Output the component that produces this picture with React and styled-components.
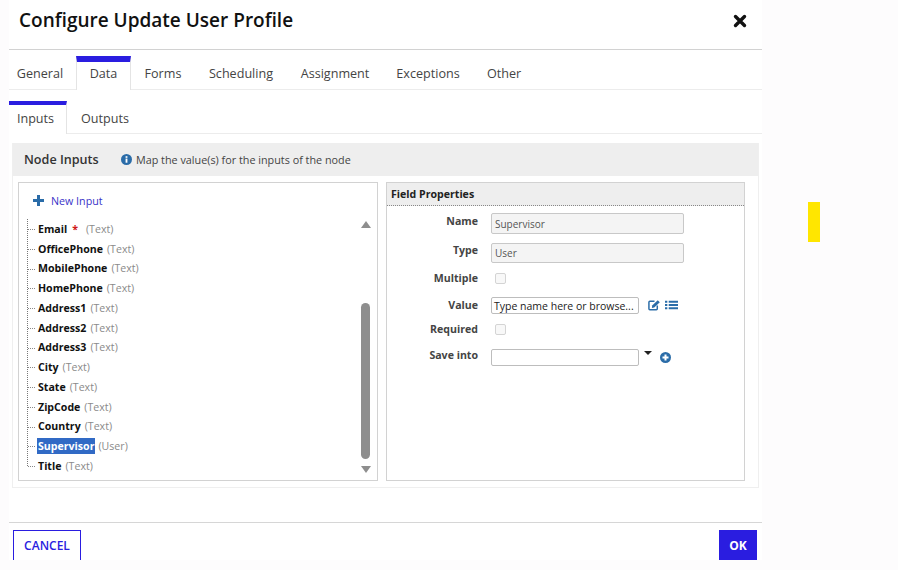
import React from 'react';
import styled, { createGlobalStyle, css } from 'styled-components';

const Global = createGlobalStyle`
  html, body { margin: 0; padding: 0; background: #fdfcfd; }
  * { box-sizing: border-box; }
`;
const BLUE = '#2a1de0';
const ICON = '#2a6ca8';

const Page = styled.div`
  width: 898px; height: 570px; display: flex; padding-left: 9px; overflow: hidden;
  background: #fdfcfd; font-family: "Open Sans", "Liberation Sans", sans-serif; color: #333;
`;
const Modal = styled.div`
  width: 753px; height: 560px; background: #fff; display: flex; flex-direction: column; overflow: hidden;
`;
const Side = styled.div`
  flex: 1; padding: 202px 0 0 46px;
`;
const Marker = styled.div`
  width: 12px; height: 40px; background: #ffe600;
`;
const Header = styled.header`
  height: 50px; flex: none; border-bottom: 1px solid #d2d2d2; display: flex; justify-content: space-between;
  padding: 6px 15px 0 10px;
`;
const Title = styled.h1`
  margin: 0; font-size: 19px; line-height: 28px; font-weight: 600; color: #111;
`;
const Close = styled.svg`
  width: 14px; height: 14px; margin-top: 8px;
`;
const TabBar = styled.nav`
  display: flex; flex: none; height: ${p => p.$h}px; margin-top: ${p => p.$top}px; border-bottom: 1px solid #ececec;
`;
const tabBase = css`
  font-size: 12.6px; color: #444; display: flex; align-items: center; justify-content: center;
  width: ${p => p.$w}px; margin-bottom: -1px; padding-right: ${p => p.$shift || 0}px;
`;
const MainTab = styled.div`
  ${tabBase}
  height: 40px; padding-top: 6px;
  ${p => p.$active && css`
    height: 34px; margin-top: 6px; padding: 0 0 6px; background: #fff;
    border-top: 6px solid ${BLUE}; border-left: 1px solid #e4e4e4; border-right: 1px solid #e4e4e4;
  `}
`;
const SubTab = styled.div`
  ${tabBase}
  height: 33px; padding-top: 4px; padding-bottom: 3px;
  ${p => p.$active && css`
    padding-top: 0; background: #fff; border-top: 4px solid ${BLUE}; border-right: 1px solid #e4e4e4;
  `}
`;
const Panel = styled.section`
  margin: 9px 3px 0; height: 345px; flex: none; border: 1px solid #efefef; border-top: 0; display: flex; flex-direction: column;
`;
const PanelHead = styled.div`
  height: 33px; flex: none; background: #eee; display: flex; align-items: center; padding-left: 11px;
`;
const PanelTitle = styled.span`
  font-size: 12.6px; font-weight: 600; color: #333; width: 97px;
`;
const Hint = styled.span`
  font-size: 10.8px; color: #444; display: flex; align-items: center; gap: 4px;
`;
const Columns = styled.div`
  display: flex; gap: 8px; padding: 6px 0 0 5px;
`;
const Box = styled.div`
  width: ${p => p.$w}px; height: 299px; border: 1px solid #d2d2d2; position: relative;
`;
const NewInput = styled.div`
  display: flex; align-items: center; gap: 7px; font-size: 10.7px; color: #3a33c8; padding: 0 0 1px 14px; height: 36px;
`;
const Tree = styled.ul`
  list-style: none; margin: 0; padding: 0 0 0 7px; position: relative;
  &::before { content: ""; position: absolute; left: 8px; top: 0; height: 247px; border-left: 1px dotted #777; }
`;
const Node = styled.li`
  height: 19.75px; display: flex; align-items: center; font-size: 10.6px; padding-left: 11px; position: relative;
  &::before { content: ""; position: absolute; left: 2px; top: 10px; width: 7px; border-top: 1px dotted #888; }
`;
const NodeName = styled.span`
  font-weight: 700; color: #111; padding: 0 1px;
  ${p => p.$sel && 'background: #316ac5; color: #fff; line-height: 16px;'}
`;
const Star = styled.span`
  color: #d01818; font-weight: 700; margin-left: 4px; margin-right: 5px;
`;
const NodeType = styled.span`
  color: #8a8a8a; margin-left: 3px;
`;
const Scroll = styled.div`
  position: absolute; right: 6px; top: 38px; bottom: 7px; width: 11px; display: flex; flex-direction: column; align-items: center; justify-content: space-between;
`;
const Thumb = styled.div`
  position: absolute; left: 1px; top: 82px; width: 9px; height: 156px; border-radius: 4.5px; background: #8e8e8e;
`;
const Arrow = styled.div`
  width: 0; height: 0; border-left: 5px solid transparent; border-right: 5px solid transparent;
  ${p => (p.$up ? 'border-bottom: 7px solid #8e8e8e;' : 'border-top: 7px solid #8e8e8e;')}
`;
const FieldHead = styled.div`
  height: 23px; background: #eee; border-bottom: 1px dotted #888; font-size: 10.6px; font-weight: 700; color: #222;
  display: flex; align-items: center; padding-left: 4px;
`;
const Form = styled.div`
  display: grid; grid-template-columns: 91px auto; column-gap: 13px; padding-top: 7px;
`;
const Label = styled.div`
  font-size: 10.6px; font-weight: 700; color: #444; text-align: right; line-height: 16px;
  height: ${p => p.$h}px; margin-top: ${p => p.$lift ? -p.$lift : 0}px;
`;
const Row = styled.div`
  height: ${p => p.$h}px; display: flex; align-items: flex-start; gap: ${p => p.$gap || 0}px;
`;
const TextBox = styled.div`
  width: ${p => p.$w}px; height: ${p => p.$ht}px; border: 1px solid ${p => (p.$off ? '#c8c8c8' : '#bdbdbd')}; border-radius: 2px;
  background: ${p => (p.$off ? '#f4f4f4' : '#fff')}; color: ${p => (p.$off ? '#555' : '#222')};
  font-size: ${p => (p.$off ? 10 : 10.5)}px; display: flex; align-items: center; padding-left: ${p => (p.$off ? 3 : 2)}px;
`;
const Check = styled.div`
  width: 11px; height: 11px; margin: 3px 0 0 4px; border: 1px solid #d4d4d4; border-radius: 2px; background: #f8f8f8;
`;
const Caret = styled.div`
  width: 0; height: 0; margin-top: 2px; border-left: 4px solid transparent; border-right: 4px solid transparent; border-top: 4px solid #222;
`;
const Footer = styled.footer`
  margin-top: 34px; border-top: 1px solid #d6d6d6; padding: 7px 5px 0 4px; display: flex; justify-content: space-between; flex: 1;
`;
const Cancel = styled.button`
  width: 68px; height: 30px; background: #fff; border: 1px solid ${BLUE}; border-bottom: 0; color: ${BLUE}; font: 600 12px "Open Sans", sans-serif; padding: 0;
`;
const Ok = styled.button`
  width: 38px; height: 30px; background: ${BLUE}; border: 0; color: #fff; font: 700 12px "Open Sans", sans-serif; padding: 0;
`;
const IconSvg = styled.svg`
  display: block; flex: none; margin: ${p => p.$m || 0};
`;

const items = [
  ['Email', 'Text', true], ['OfficePhone', 'Text'], ['MobilePhone', 'Text'], ['HomePhone', 'Text'],
  ['Address1', 'Text'], ['Address2', 'Text'], ['Address3', 'Text'], ['City', 'Text'], ['State', 'Text'],
  ['ZipCode', 'Text'], ['Country', 'Text'], ['Supervisor', 'User', false, true], ['Title', 'Text'],
];
const mainTabs = [['General', 67, 5], ['Data', 55], ['Forms', 64], ['Scheduling', 92], ['Assignment', 96], ['Exceptions', 90], ['Other', 62]];

export default function App() {
  return (
    <Page>
      <Global />
      <Modal>
        <Header>
          <Title>Configure Update User Profile</Title>
          <Close viewBox="0 0 14 14"><path d="M2.5 2.5 L11.5 11.5 M11.5 2.5 L2.5 11.5" stroke="#111" strokeWidth="3.4" strokeLinecap="round" /></Close>
        </Header>
        <TabBar $h={40} $top={0}>
          {mainTabs.map(([t, w, shift]) => (
            <MainTab key={t} $w={w} $shift={shift} $active={t === 'Data'}>{t}</MainTab>
          ))}
        </TabBar>
        <TabBar $h={33} $top={11}>
          <SubTab $w={58} $shift={4} $active>Inputs</SubTab>
          <SubTab $w={76}>Outputs</SubTab>
        </TabBar>
        <Panel>
          <PanelHead>
            <PanelTitle>Node Inputs</PanelTitle>
            <Hint>
              <IconSvg width="11" height="11" viewBox="0 0 12 12">
                <circle cx="6" cy="6" r="6" fill={ICON} />
                <rect x="5" y="5" width="2" height="4.5" fill="#fff" />
                <rect x="5" y="2.4" width="2" height="1.8" fill="#fff" />
              </IconSvg>
              Map the value(s) for the inputs of the node
            </Hint>
          </PanelHead>
          <Columns>
            <Box $w={360}>
              <NewInput>
                <IconSvg width="11" height="11" viewBox="0 0 11 11"><path d="M4 0h3v4h4v3H7v4H4V7H0V4h4z" fill={ICON} /></IconSvg>
                New Input
              </NewInput>
              <Tree>
                {items.map(([n, t, req, sel]) => (
                  <Node key={n}>
                    <NodeName $sel={sel}>{n}</NodeName>
                    {req && <Star>*</Star>}
                    <NodeType>({t})</NodeType>
                  </Node>
                ))}
              </Tree>
              <Scroll>
                <Arrow $up />
                <Thumb />
                <Arrow />
              </Scroll>
            </Box>
            <Box $w={359}>
              <FieldHead>Field Properties</FieldHead>
              <Form>
                <Label $h={30}>Name</Label>
                <Row $h={30}><TextBox $off $w={193} $ht={21}>Supervisor</TextBox></Row>
                <Label $h={27} $lift={1}>Type</Label>
                <Row $h={27}><TextBox $off $w={193} $ht={20}>User</TextBox></Row>
                <Label $h={27}>Multiple</Label>
                <Row $h={27}><Check /></Row>
                <Label $h={24}>Value</Label>
                <Row $h={24} $gap={9}>
                  <TextBox $w={148} $ht={17}>Type name here or browse...</TextBox>
                  <IconSvg $m="2px 0 0 0" width="13" height="12" viewBox="0 0 14 12">
                    <path d="M10 6.5V10a1 1 0 0 1-1 1H2a1 1 0 0 1-1-1V3a1 1 0 0 1 1-1h5" fill="none" stroke={ICON} strokeWidth="1.6" />
                    <path d="M4.5 6.5 10.5 .8l2.2 2.2-6 5.8-2.5.4z" fill={ICON} />
                  </IconSvg>
                  <IconSvg $m="2px 0 0 -5px" width="13" height="12" viewBox="0 0 14 12">
                    <path d="M4 1.5h10v2H4zM4 5h10v2H4zM4 8.5h10v2H4zM0 1.5h2.5v2H0zM0 5h2.5v2H0zM0 8.5h2.5v2H0z" fill={ICON} />
                  </IconSvg>
                </Row>
                <Label $h={28}>Required</Label>
                <Row $h={28}><Check /></Row>
                <Label $h={20} $lift={2}>Save into</Label>
                <Row $h={20} $gap={5}>
                  <TextBox $w={148} $ht={17} />
                  <Caret />
                  <IconSvg $m="3px 0 0 3px" width="11" height="11" viewBox="0 0 11 11">
                    <circle cx="5.5" cy="5.5" r="5.5" fill={ICON} />
                    <path d="M4.5 2.5h2v2h2v2h-2v2h-2v-2h-2v-2h2z" fill="#fff" />
                  </IconSvg>
                </Row>
              </Form>
            </Box>
          </Columns>
        </Panel>
        <Footer>
          <Cancel>CANCEL</Cancel>
          <Ok>OK</Ok>
        </Footer>
      </Modal>
      <Side><Marker /></Side>
    </Page>
  );
}
